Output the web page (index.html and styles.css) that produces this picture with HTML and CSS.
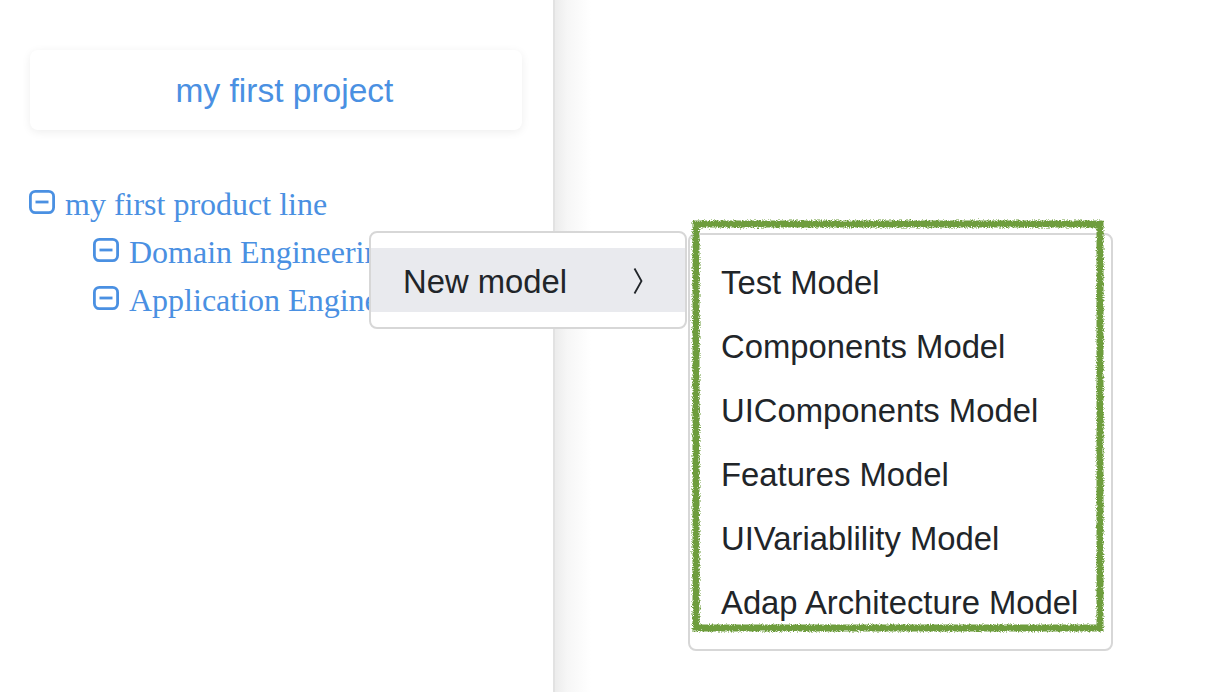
FILE: index.html
```html
<!DOCTYPE html>
<html>
<head>
<meta charset="utf-8">
<link rel="stylesheet" href="styles.css">
</head>
<body>
<div class="app">
  <aside class="sidebar">
    <div class="project-card">my first project</div>
    <ul class="tree">
      <li class="row">
        <svg class="toggle" width="26" height="24" viewBox="0 0 26 24"><rect x="1.4" y="1.4" width="23.2" height="21.2" rx="5" fill="none" stroke="#4a90e2" stroke-width="2.8"/><line x1="6.5" y1="12" x2="19.5" y2="12" stroke="#4a90e2" stroke-width="2.8"/></svg>
        <span class="label">my first product line</span>
      </li>
      <li class="row sub">
        <svg class="toggle" width="26" height="24" viewBox="0 0 26 24"><rect x="1.4" y="1.4" width="23.2" height="21.2" rx="5" fill="none" stroke="#4a90e2" stroke-width="2.8"/><line x1="6.5" y1="12" x2="19.5" y2="12" stroke="#4a90e2" stroke-width="2.8"/></svg>
        <span class="label">Domain Engineering</span>
      </li>
      <li class="row sub">
        <svg class="toggle" width="26" height="24" viewBox="0 0 26 24"><rect x="1.4" y="1.4" width="23.2" height="21.2" rx="5" fill="none" stroke="#4a90e2" stroke-width="2.8"/><line x1="6.5" y1="12" x2="19.5" y2="12" stroke="#4a90e2" stroke-width="2.8"/></svg>
        <span class="label">Application Engineering</span>
      </li>
    </ul>
  </aside>
  <main class="main"></main>
</div>

<div class="menu menu-main">
  <div class="menu-item active">
    <span class="item-text">New model</span>
    <svg class="chev" width="10" height="28" viewBox="0 0 10 28"><polyline points="1.5,1.5 8.5,14 1.5,26.5" fill="none" stroke="#212529" stroke-width="1.8"/></svg>
  </div>
</div>

<div class="menu menu-sub">
  <div class="menu-item"><span class="item-text">Test Model</span></div>
  <div class="menu-item"><span class="item-text">Components Model</span></div>
  <div class="menu-item"><span class="item-text">UIComponents Model</span></div>
  <div class="menu-item"><span class="item-text">Features Model</span></div>
  <div class="menu-item"><span class="item-text">UIVariablility Model</span></div>
  <div class="menu-item"><span class="item-text">Adap Architecture Model</span></div>
</div>

<svg class="highlight" width="424" height="424" viewBox="0 0 424 424">
  <defs>
    <filter id="rough" x="-5%" y="-5%" width="110%" height="110%">
      <feTurbulence type="fractalNoise" baseFrequency="0.9" numOctaves="2" seed="3" result="noise"/>
      <feDisplacementMap in="SourceGraphic" in2="noise" scale="5" xChannelSelector="R" yChannelSelector="G"/>
    </filter>
  </defs>
  <rect x="10" y="10" width="404" height="404" fill="none" stroke="#6e9d3d" stroke-width="7" filter="url(#rough)"/>
</svg>
</body>
</html>
```

FILE: styles.css
```css
* { box-sizing: border-box; }

html, body {
  margin: 0;
  padding: 0;
  background: #fff;
}

.app {
  display: flex;
  width: 1216px;
  height: 692px;
  overflow: hidden;
}

.sidebar {
  width: 555px;
  flex: 0 0 555px;
  border-right: 2px solid #e2e2e2;
  padding: 50px 32px 0 29px;
  background: #fff;
}

.project-card {
  height: 80px;
  width: 492px;
  margin-left: 1px;
  border-radius: 8px;
  background: #fff;
  box-shadow: 0 2px 10px rgba(0, 0, 0, 0.07);
  display: flex;
  align-items: center;
  justify-content: center;
  padding-left: 17px;
  padding-top: 2px;
  font-family: "Liberation Sans", Arial, sans-serif;
  font-size: 33.5px;
  color: #4a90e2;
}

.tree {
  list-style: none;
  margin: 48px 0 0 0;
  padding: 0;
}

.row {
  display: flex;
  align-items: center;
  gap: 10px;
  height: 48px;
  font-family: "Liberation Serif", "Times New Roman", serif;
  font-size: 32px;
  color: #4a90e2;
  white-space: nowrap;
}

.row .label {
  line-height: 48px;
  padding-top: 3px;
}

.row.sub {
  padding-left: 64px;
}

.toggle {
  flex: 0 0 auto;
}

.main {
  flex: 1;
  background: linear-gradient(to right, #ececec 0px, #f6f6f6 12px, #fff 36px);
}

.menu {
  position: absolute;
  background: #fff;
  border: 2px solid #d7d7d7;
  border-radius: 8px;
  font-family: "Liberation Sans", Arial, sans-serif;
  font-size: 32.8px;
  color: #212529;
}

.menu-main {
  left: 369px;
  top: 231px;
  width: 318px;
  padding: 15px 0;
}

.menu-sub {
  left: 688px;
  top: 233px;
  width: 425px;
  height: 418px;
  padding: 14px 0 16px;
}

.menu-item {
  height: 64px;
  display: flex;
  align-items: center;
  white-space: nowrap;
  padding-left: 31px;
}

.item-text {
  padding-top: 4px;
}

.menu-main .menu-item {
  padding-left: 32px;
  padding-right: 42px;
  justify-content: space-between;
}

.menu-item.active {
  background: #e9eaee;
}

.chev {
  margin-top: 2px;
}

.highlight {
  position: absolute;
  left: 686px;
  top: 214px;
}
```
